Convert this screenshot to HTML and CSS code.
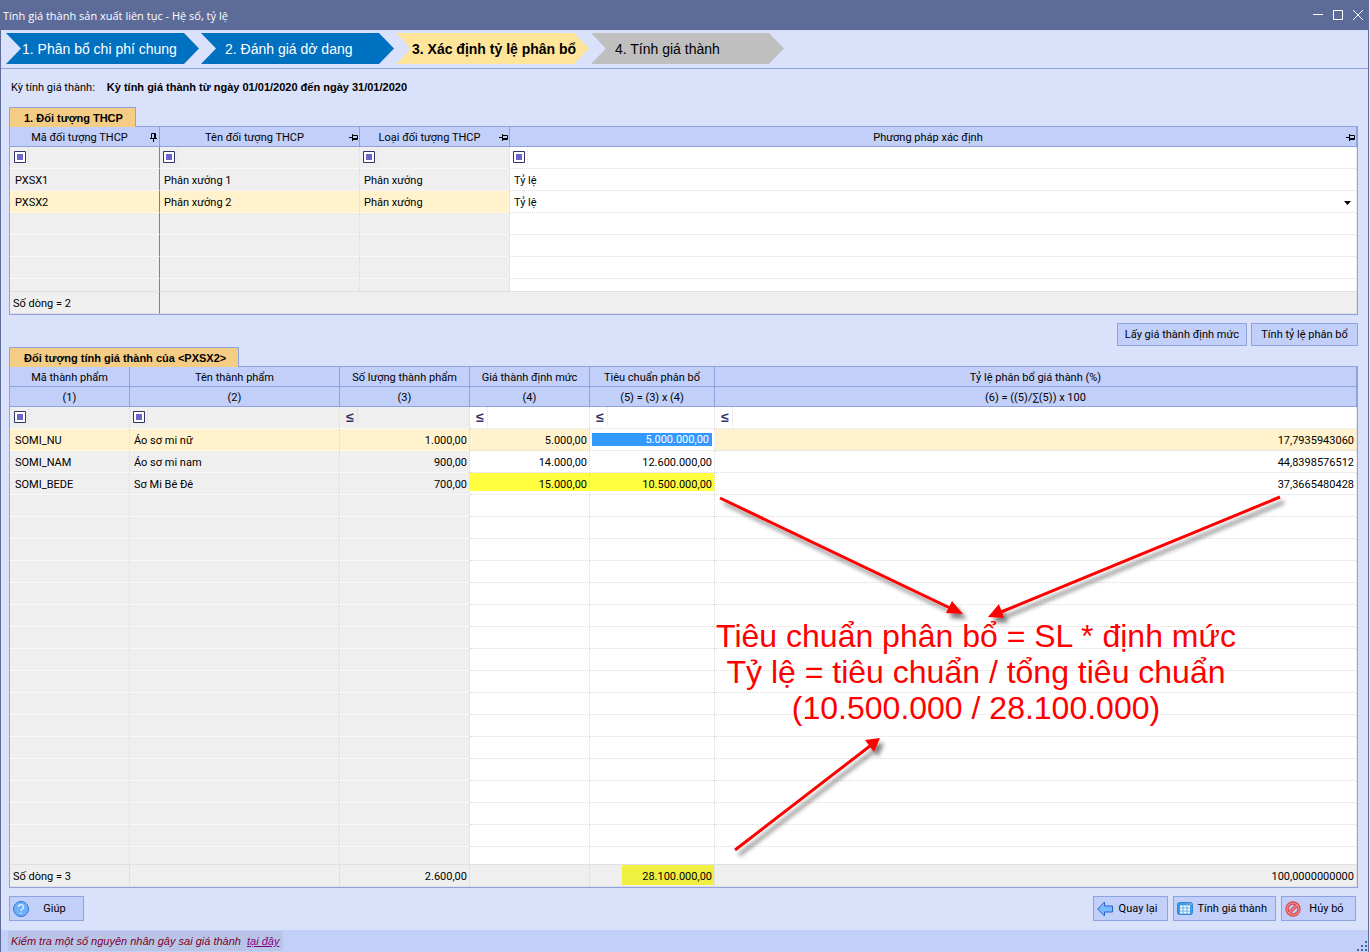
FILE: index.html
```html
<!DOCTYPE html>
<html lang="vi">
<head>
    <meta charset="UTF-8">
    <title>Tính giá thành sản xuất liên tục - Hệ số, tỷ lệ</title>
    <link rel="stylesheet" href="styles.css">
</head>
<body>
    <svg class="defs" width="0" height="0">
        <symbol id="pin" viewBox="0 0 9 9">
            <path d="M0 4.5h3M3.5 1v7M3.5 2.5h5v4h-5M4 5.5h5" fill="none" stroke="#000"/>
        </symbol>
        <symbol id="pinned" viewBox="0 0 9 9">
            <path d="M4.500 6v3M1 5.500h7M2.500 5.500v-5h4v5M5.500 0v6" fill="none" stroke="#000"/>
        </symbol>
        <symbol id="box" viewBox="0 0 12 12">
            <path d="M.5.5h11v11H.5z" fill="#fff" stroke="#333366"/>
            <path d="M3 3h6v6H3z" fill="#6a66cc"/>
        </symbol>
    </svg>
    <div class="window">
        <div class="titlebar">
            <span class="title">Tính giá thành sản xuất liên tục - Hệ số, tỷ lệ</span>
            <button class="winbtn" aria-label="Minimize"><svg width="10" height="10"><path d="M0 4.500h10" stroke="#fff"/></svg></button>
            <button class="winbtn" aria-label="Maximize"><svg width="10" height="10"><path d="M.5.5h9v9h-9z" fill="none" stroke="#fff"/></svg></button>
            <button class="winbtn" aria-label="Close"><svg width="10" height="10"><path d="M0 0l10 10M10 0L0 10" stroke="#fff"/></svg></button>
        </div>

        <div class="steps">
            <button class="step done">1. Phân bổ chi phí chung</button>
            <button class="step done wide">2. Đánh giá dở dang</button>
            <button class="step current">3. Xác định tỷ lệ phân bổ</button>
            <button class="step next wide">4. Tính giá thành</button>
        </div>

        <div class="content">
            <div class="period"><span>Kỳ tính giá thành:</span><b>Kỳ tính giá thành từ ngày 01/01/2020 đến ngày 31/01/2020</b></div>

            <h2 class="tab">1. Đối tượng THCP</h2>
            <div class="grid">
                <table class="objects">
                    <colgroup><col class="c150 ro"><col class="c200 ro"><col class="c150 ro"><col></colgroup>
                    <thead>
                        <tr>
                            <th><div class="head"><span>Mã đối tượng THCP</span><svg class="pin"><use href="#pinned"/></svg></div></th>
                            <th><div class="head"><span>Tên đối tượng THCP</span><svg class="pin"><use href="#pin"/></svg></div></th>
                            <th><div class="head"><span>Loại đối tượng THCP</span><svg class="pin"><use href="#pin"/></svg></div></th>
                            <th><div class="head"><span>Phương pháp xác định</span><svg class="pin"><use href="#pin"/></svg></div></th>
                        </tr>
                    </thead>
                    <tbody>
                        <tr class="filter">
                            <td><div class="cell"><button aria-label="Lọc"><svg><use href="#box"/></svg></button><input type="text" aria-label="Mã đối tượng"></div></td>
                            <td><div class="cell"><button aria-label="Lọc"><svg><use href="#box"/></svg></button><input type="text" aria-label="Tên đối tượng"></div></td>
                            <td><div class="cell"><button aria-label="Lọc"><svg><use href="#box"/></svg></button><input type="text" aria-label="Loại đối tượng"></div></td>
                            <td><div class="cell"><button aria-label="Lọc"><svg><use href="#box"/></svg></button><input type="text" aria-label="Phương pháp"></div></td>
                        </tr>
                        <tr><td>PXSX1</td><td>Phân xưởng 1</td><td>Phân xưởng</td><td>Tỷ lệ</td></tr>
                        <tr class="selected">
                            <td>PXSX2</td><td>Phân xưởng 2</td><td>Phân xưởng</td>
                            <td class="edit">
                                <div class="dropdown">
                                    <select aria-label="Phương pháp xác định"><option>Tỷ lệ</option><option>Hệ số</option></select>
                                    <svg width="7" height="4"><path d="M0 0h7L3.500 4z"/></svg>
                                </div>
                            </td>
                        </tr>
                        <tr><td></td><td></td><td></td><td></td></tr>
                        <tr><td></td><td></td><td></td><td></td></tr>
                        <tr><td></td><td></td><td></td><td></td></tr>
                        <tr class="cut"><td></td><td></td><td></td><td></td></tr>
                    </tbody>
                    <tfoot>
                        <tr><td>Số dòng = 2</td><td colspan="3"></td></tr>
                    </tfoot>
                </table>
            </div>

            <div class="actions">
                <button class="btn">Lấy giá thành định mức</button>
                <button class="btn">Tính tỷ lệ phân bổ</button>
            </div>

            <h2 class="tab">Đối tượng tính giá thành của &lt;PXSX2&gt;</h2>
            <div class="grid">
                <table class="products">
                    <colgroup><col class="c120 ro"><col class="c210 ro"><col class="c130 ro"><col class="c120"><col class="c125"><col></colgroup>
                    <thead>
                        <tr><th>Mã thành phẩm</th><th>Tên thành phẩm</th><th>Số lượng thành phẩm</th><th>Giá thành định mức</th><th>Tiêu chuẩn phân bổ</th><th>Tỷ lệ phân bổ giá thành (%)</th></tr>
                        <tr><th>(1)</th><th>(2)</th><th>(3)</th><th>(4)</th><th>(5) = (3) x (4)</th><th>(6) = ((5)/∑(5)) x 100</th></tr>
                    </thead>
                    <tbody>
                        <tr class="filter">
                            <td><div class="cell"><button aria-label="Lọc"><svg><use href="#box"/></svg></button><input type="text" aria-label="Mã thành phẩm"></div></td>
                            <td><div class="cell"><button aria-label="Lọc"><svg><use href="#box"/></svg></button><input type="text" aria-label="Tên thành phẩm"></div></td>
                            <td><div class="cell"><button>≤</button><input type="text" aria-label="Số lượng"></div></td>
                            <td><div class="cell"><button>≤</button><input type="text" aria-label="Giá thành định mức"></div></td>
                            <td><div class="cell"><button>≤</button><input type="text" aria-label="Tiêu chuẩn phân bổ"></div></td>
                            <td><div class="cell"><button>≤</button><input type="text" aria-label="Tỷ lệ phân bổ"></div></td>
                        </tr>
                        <tr class="selected">
                            <td>SOMI_NU</td><td>Áo sơ mi nữ</td><td class="num">1.000,00</td><td class="num">5.000,00</td>
                            <td class="edit"><input class="active" type="text" aria-label="Tiêu chuẩn phân bổ" value="5.000.000,00"></td>
                            <td class="num">17,7935943060</td>
                        </tr>
                        <tr><td>SOMI_NAM</td><td>Áo sơ mi nam</td><td class="num">900,00</td><td class="num">14.000,00</td><td class="num">12.600.000,00</td><td class="num">44,8398576512</td></tr>
                        <tr><td>SOMI_BEDE</td><td>Sơ Mi Bê Đê</td><td class="num">700,00</td><td class="num marked">15.000,00</td><td class="num marked">10.500.000,00</td><td class="num">37,3665480428</td></tr>
                        <tr><td></td><td></td><td></td><td></td><td></td><td></td></tr>
                        <tr><td></td><td></td><td></td><td></td><td></td><td></td></tr>
                        <tr><td></td><td></td><td></td><td></td><td></td><td></td></tr>
                        <tr><td></td><td></td><td></td><td></td><td></td><td></td></tr>
                        <tr><td></td><td></td><td></td><td></td><td></td><td></td></tr>
                        <tr><td></td><td></td><td></td><td></td><td></td><td></td></tr>
                        <tr><td></td><td></td><td></td><td></td><td></td><td></td></tr>
                        <tr><td></td><td></td><td></td><td></td><td></td><td></td></tr>
                        <tr><td></td><td></td><td></td><td></td><td></td><td></td></tr>
                        <tr><td></td><td></td><td></td><td></td><td></td><td></td></tr>
                        <tr><td></td><td></td><td></td><td></td><td></td><td></td></tr>
                        <tr><td></td><td></td><td></td><td></td><td></td><td></td></tr>
                        <tr><td></td><td></td><td></td><td></td><td></td><td></td></tr>
                        <tr><td></td><td></td><td></td><td></td><td></td><td></td></tr>
                        <tr><td></td><td></td><td></td><td></td><td></td><td></td></tr>
                        <tr><td></td><td></td><td></td><td></td><td></td><td></td></tr>
                        <tr class="cut"><td></td><td></td><td></td><td></td><td></td><td></td></tr>
                    </tbody>
                    <tfoot>
                        <tr><td>Số dòng = 3</td><td></td><td class="num">2.600,00</td><td></td><td class="num total">28.100.000,00</td><td class="num">100,0000000000</td></tr>
                    </tfoot>
                </table>

                <!-- arrows and formula over the grid -->
                <svg class="arrows" width="620" height="380" viewBox="700 490 620 380">
                    <defs>
                        <filter id="shadow" x="-20%" y="-20%" width="140%" height="140%">
                            <feDropShadow dx="4" dy="5" stdDeviation="2" flood-color="#000" flood-opacity=".5"/>
                        </filter>
                    </defs>
                    <g filter="url(#shadow)" stroke="#f00" stroke-width="3" fill="#f00">
                        <path d="M720 498L950 608M1280 497L1001 612M735 850L870 746"/>
                        <path d="M963 614l-17-1 6-12zM988 617l11-13 5 14zM880 738l-15 2 9 12z" stroke="none"/>
                    </g>
                </svg>
                <div class="note">Tiêu chuẩn phân bổ = SL * định mức<br>Tỷ lệ = tiêu chuẩn / tổng tiêu chuẩn<br>(10.500.000 / 28.100.000)</div>
            </div>

            <div class="bottom">
                <button class="btn icon help">
                    <svg width="16" height="16"><circle cx="8" cy="8" r="7.500" fill="#6fb0fb" stroke="#2f76d2"/><path d="M5.500 6a2.500 2.300 0 1 1 3.600 2Q8 8.600 8 10M8 11.500v1.500" fill="none" stroke="#e4f1ff" stroke-width="1.300"/></svg>
                    <span>Giúp</span>
                </button>
                <button class="btn icon">
                    <svg width="16" height="16"><path d="M.7 8L7.500 1v4h8v6h-8v4z" fill="#7cb9fb" stroke="#2467c9"/></svg>
                    <span>Quay lại</span>
                </button>
                <button class="btn icon">
                    <svg width="16" height="16"><rect x=".5" y="1.500" width="15" height="12" rx="2" fill="#3c9be8" stroke="#3187d4"/><path d="M10 3h1.500M13 3h1.500" stroke="#ffc070"/><path d="M3 4.500h10v8H3z" fill="#fff"/><path d="M3 7h10M3 10h10M6 5v7.500M10 5v7.500" stroke="#5cadea"/></svg>
                    <span>Tính giá thành</span>
                </button>
                <button class="btn icon cancel">
                    <svg width="16" height="16"><circle cx="8" cy="8" r="6" fill="none" stroke="#d8474b" stroke-width="3.400"/><path d="M4 12l8-8" stroke="#d8474b" stroke-width="3.400"/><circle cx="8" cy="8" r="6" fill="none" stroke="#f28a8a" stroke-width="1.200"/><path d="M4 12l8-8" stroke="#f28a8a" stroke-width="1.200"/></svg>
                    <span>Hủy bỏ</span>
                </button>
            </div>
        </div>

        <div class="status">
            <p class="hint">Kiểm tra một số nguyên nhân gây sai giá thành <a href="#">tại đây</a></p>
            <svg width="11" height="11"><path d="M8 0h2v2H8zM4 4h2v2H4zM8 4h2v2H8zM0 8h2v2H0zM4 8h2v2H4zM8 8h2v2H8z" fill="#4b62a3"/></svg>
        </div>
    </div>
</body>
</html>
```
FILE: styles.css
```css
* {
    box-sizing: border-box;
}
body {
    margin: 0;
    padding-right: 1px;
    background-color: #e8edfb;
    font-family: Roboto, "Liberation Sans", sans-serif;
    font-size: 11px;
    color: #000;
}
button, input, select {
    font: inherit;
    color: inherit;
    margin: 0;
    padding: 0;
    border: 0;
    background: none;
}
.defs {
    position: absolute;
}
.window {
    display: flex;
    flex-direction: column;
    min-height: 100vh;
    border: 1px solid #5d6b99;
    border-width: 0 1px;
    background-color: #dae1fb;
}

/* title bar */
.titlebar {
    display: flex;
    align-items: center;
    height: 30px;
    padding-left: 2px;
    background-color: #5d6b99;
    color: #fff;
}
.title {
    flex: 1;
    font-family: "Open Sans", "Noto Sans", sans-serif;
    font-size: 11px;
}
.winbtn {
    width: 20px;
    height: 20px;
}
.winbtn svg {
    display: block;
    margin: auto;
}

/* wizard steps */
.steps {
    display: flex;
    gap: 2px;
    padding: 3px 5px 4px;
    border-bottom: 1px solid #8ea2e0;
}
.step {
    width: 193px;
    height: 31px;
    padding-left: 16px;
    clip-path: polygon(0 0, 178px 0, 100% 50%, 178px 100%, 0 100%, 15px 50%);
    font-family: "Liberation Sans", Arial, sans-serif;
    font-size: 14px;
    text-align: left;
    white-space: nowrap;
}
.step.wide {
    padding-left: 24px;
}
.step.done {
    background-color: #0070c0;
    color: #fff;
}
.step.current {
    background-color: #ffe59a;
    font-weight: bold;
}
.step.next {
    background-color: #bfbfbf;
}

.content {
    flex: 1;
    padding: 0 10px 9px 8px;
}
.period {
    display: flex;
    gap: 12px;
    align-items: center;
    height: 38px;
    padding: 0 0 2px 2px;
}
.period b {
    font-family: "Liberation Sans", Arial, sans-serif;
}

/* grids */
.tab {
    position: relative;
    z-index: 1;
    width: fit-content;
    height: 20px;
    margin: 0 0 -1px;
    padding: 0 12px 0 14px;
    border: 1px solid #8ea2e0;
    border-bottom: 0;
    background-color: #f5cc84;
    font-family: "Liberation Sans", Arial, sans-serif;
    font-size: 11px;
    line-height: 20px;
}
.grid {
    position: relative;
    border: 1px solid #8ea2e0;
}
table {
    width: 100%;
    table-layout: fixed;
    border-collapse: separate;
    border-spacing: 0;
    background-color: #fff;
}
.c120 { width: 120px; }
.c125 { width: 125px; }
.c130 { width: 130px; }
.c150 { width: 150px; }
.c200 { width: 200px; }
.c210 { width: 210px; }
.ro {
    background-color: #efefef;
}
th {
    height: 20px;
    padding: 2px 0 0;
    border: 1px solid #8ea2e0;
    border-width: 0 1px 1px 0;
    background-color: #c2cff9;
    font-weight: normal;
}
.head {
    display: flex;
    align-items: center;
    padding-right: 1px;
}
.head span {
    flex: 1;
}
.pin {
    width: 9px;
    height: 9px;
}
td {
    height: 22px;
    padding: 2px 2px 0 4px;
    border: 1px dotted #dcdcdc;
    border-width: 0 1px 1px 0;
}
tbody td:nth-child(-n+3) {
    border-bottom-color: #fff;
}
tbody td:first-child {
    padding-left: 5px;
}
.num {
    text-align: right;
}
.selected td {
    background-color: #fff2cc;
}
.selected .edit {
    background-color: #fff;
}
.objects td:first-child {
    border-right: 1px solid #808080;
}
.cut td {
    height: 12px;
    border-bottom: 0;
}
.products .cut td {
    height: 17px;
}
tfoot td {
    height: 23px;
    padding-left: 3px;
    border: 1px solid #e0e0e0;
    border-left: 0;
    background-color: #efefef;
}
.filter td {
    padding-top: 0;
    padding-left: 3px;
    vertical-align: top;
}
.filter td:first-child {
    padding-left: 4px;
}
.cell {
    display: flex;
    align-items: center;
    height: 19px;
}
.cell button {
    width: 15px;
    height: 19px;
    border-right: 1px dotted #dcdcdc;
    color: #333366;
    font-family: "Liberation Sans", Arial, sans-serif;
    font-size: 14px;
    font-weight: bold;
    text-align: center;
}
.cell svg {
    display: block;
    width: 12px;
    height: 12px;
}
.cell input {
    flex: 1;
    min-width: 0;
}
.dropdown {
    display: flex;
    align-items: center;
    padding-right: 3px;
}
.dropdown select {
    flex: 1;
    appearance: none;
}
.active {
    display: block;
    width: 100%;
    height: 13px;
    padding-right: 3px;
    background-color: #3399ff;
    color: #fff;
    text-align: right;
}
td.edit:has(.active) {
    padding-top: 0;
    padding-left: 2px;
}
.marked {
    background: linear-gradient(#ffff40, #ffff40) no-repeat 0 0 / 100% 18px border-box;
}
tfoot .total {
    background: linear-gradient(#f0f040, #f0f040) no-repeat 100% 0 / 93px 21px border-box #efefef;
}

/* notes drawn over the grid */
.arrows {
    position: absolute;
    left: 690px;
    top: 123px;
}
.note {
    position: absolute;
    left: 706px;
    top: 251px;
    width: 520px;
    color: #f00;
    font-family: "Liberation Sans", Arial, sans-serif;
    font-size: 32px;
    line-height: 36px;
    text-align: center;
    white-space: nowrap;
}

/* buttons */
.actions {
    display: flex;
    justify-content: flex-end;
    gap: 4px;
    padding: 8px 0 1px;
}
.btn {
    height: 23px;
    min-width: 107px;
    padding: 0 7px;
    border: 1px solid #8ea2e0;
    background-color: #c2cff9;
}
.bottom {
    display: flex;
    gap: 5px;
    padding: 8px 2px 0 0;
}
.icon {
    display: flex;
    align-items: center;
    gap: 5px;
    height: 25px;
    min-width: 75px;
    padding: 0 8px 0 3px;
}
.icon span {
    flex: 1;
    text-align: center;
}
.help {
    margin-right: auto;
}

/* status bar */
.status {
    display: flex;
    justify-content: space-between;
    align-items: flex-end;
    height: 22px;
    padding-left: 7px;
    background-color: #c2cff9;
}
.hint {
    margin: 0 0 1px;
    padding: 0 4px 0 3px;
    background-color: #b9c5e6;
    color: #80002a;
    font-family: "Liberation Sans", Arial, sans-serif;
    font-style: italic;
    line-height: 20px;
}
.hint a {
    margin-left: 3px;
    color: #800080;
}
```
